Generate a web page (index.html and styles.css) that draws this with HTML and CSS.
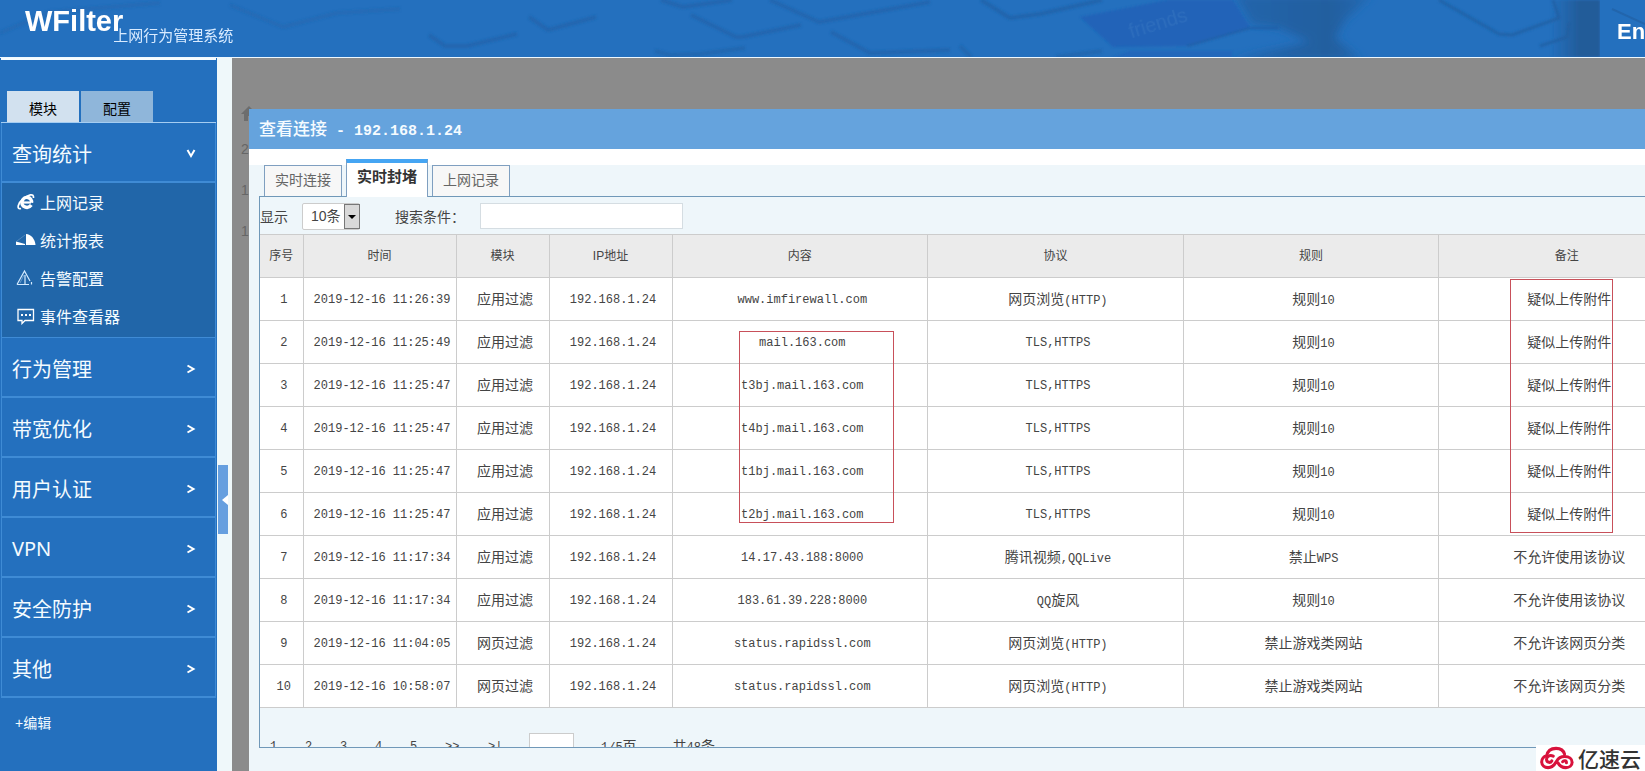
FILE: index.html
```html
<!DOCTYPE html>
<html lang="zh-CN">
<head>
<meta charset="utf-8">
<title>WFilter 上网行为管理系统</title>
<link rel="stylesheet" href="styles.css">
</head>
<body>
<div class="app">
  <header class="banner">
    <svg class="banner-art" viewBox="0 0 1645 57" preserveAspectRatio="xMinYMin slice" aria-hidden="true">
      <defs>
        <linearGradient id="edge" x1="0" x2="1"><stop offset="0" stop-color="#235f9f" stop-opacity="0"/><stop offset=".6" stop-color="#225c99"/></linearGradient>
        <linearGradient id="shade" x1="0" y1="0" x2="1" y2="0"><stop offset="0" stop-color="#2365ac"/><stop offset=".7" stop-color="#235f9f"/><stop offset="1" stop-color="#2369b2"/></linearGradient>
        <filter id="soft"><feGaussianBlur stdDeviation="1.2"/></filter>
        <filter id="softer"><feGaussianBlur stdDeviation="4"/></filter>
      </defs>
      <path d="M1235 -5 1252 24 1279 28 1310 42 1230 60H1362L1335 38 1345 20 1372 -5Z" fill="url(#shade)" filter="url(#softer)"/>
      <g filter="url(#soft)">
        <path d="M1080 17 1113 47 1187 46 1250 27 1233 0H1167Z" fill="#2064b8"/>
        <path d="M1187 46 1250 28 1279 28" stroke="#2160a8" stroke-width="2" fill="none"/>
        <path d="M1113 57 1130 51H1232V57Z" fill="#2067bb"/>
        <g fill="none" stroke="#2163a9" stroke-width="4" stroke-linejoin="round">
          <path d="M0 33 50 12 160 3M230 5 283 27 337 13 400 9" opacity=".4"/>
          <path d="M429 35 445 46H467L517 34M529 17 548 30 596 17M661 0 683 7 732 0M691 15 736 37 742 37 801 25M770 0 819 22 930 2M831 32 870 53 950 50" opacity=".7"/>
          <path d="M981 0 1010 18 1040 14 1102 0" opacity=".8"/>
          <path d="M1439 0 1499 34 1512 35 1559 18 1553 0M1540 46 1567 37 1569 22" stroke-width="3"/>
          <path d="M960 46 971 57M1056 57 1102 51M655 51 670 55 700 54 745 48" opacity=".6"/>
        </g>
        <rect x="1550" width="50" height="57" fill="url(#edge)"/>
      </g>
      <text class="key-label" transform="rotate(-17 1132 34)" x="1130" y="38">friends</text>
      <path d="M1600 0H1645V57H1600Z" fill="#2470be"/>
      <path d="M1612 9 1645 24" stroke="#2265ac" stroke-width="2"/>
    </svg>
    <div class="brand">
      <strong class="brand-name">WFilter</strong>
      <span class="brand-sub">上网行为管理系统</span>
    </div>
    <button class="lang" type="button">En</button>
  </header>

  <div class="body">
    <aside class="sidebar">
      <div class="side-tabs">
        <button class="side-tab side-tab-on" type="button">模块</button>
        <button class="side-tab" type="button">配置</button>
      </div>
      <nav class="menu">
        <button class="menu-item menu-open" type="button">查询统计<svg class="chev" viewBox="0 0 10 10"><path d="M1.500 1 5 7 8.500 1"/></svg></button>
        <ul class="submenu">
          <li><a class="sub-link" href="#"><svg class="sub-icon" viewBox="0 0 20 18"><path d="M6 9.500H15" stroke="#fff" stroke-width="2.200"/><path d="M15.500 9.800C16.500 4 8 2 6.200 8 4.500 14 12 16.500 15.300 12" fill="none" stroke="#fff" stroke-width="3.400"/><path d="M5 15.500C0 17 2 10 7 6 12 2 18-.500 17.500 5" fill="none" stroke="#fff" stroke-width="1.700"/></svg>上网记录</a></li>
          <li><a class="sub-link" href="#"><svg class="sub-icon" viewBox="0 0 20 18"><path d="M10 3C15 3 19 8 19.500 14H10Z" fill="#fff"/><path d="M0 10.500 9 13V14H0Z" fill="#fff"/><path d="M1 10 9 4" fill="none" stroke="#4f86bd"/></svg>统计报表</a></li>
          <li><a class="sub-link" href="#"><svg class="sub-icon" viewBox="0 0 20 18" fill="none" stroke="#d5ebff"><path d="M1 15.500 8.500 2 14 12M1 15.500H13M15.500 13V15.500M9 6V15" stroke-width="1.200"/><path d="M4 14 8 6" opacity=".4"/></svg>告警配置</a></li>
          <li><a class="sub-link" href="#"><svg class="sub-icon" viewBox="0 0 20 18" fill="none" stroke="#fff" stroke-width="1.300"><path d="M2 2.500H17.500V13.500H9L6 16.500V13.500H2Z"/><path d="M5 8H7M9 8H11M13 8H15" stroke-width="2"/></svg>事件查看器</a></li>
        </ul>
        <button class="menu-item" type="button">行为管理<svg class="chev" viewBox="0 0 10 10"><path d="M1.500 1.500 7.500 5 1.500 8.500"/></svg></button>
        <button class="menu-item" type="button">带宽优化<svg class="chev" viewBox="0 0 10 10"><path d="M1.500 1.500 7.500 5 1.500 8.500"/></svg></button>
        <button class="menu-item" type="button">用户认证<svg class="chev" viewBox="0 0 10 10"><path d="M1.500 1.500 7.500 5 1.500 8.500"/></svg></button>
        <button class="menu-item" type="button">VPN<svg class="chev" viewBox="0 0 10 10"><path d="M1.500 1.500 7.500 5 1.500 8.500"/></svg></button>
        <button class="menu-item" type="button">安全防护<svg class="chev" viewBox="0 0 10 10"><path d="M1.500 1.500 7.500 5 1.500 8.500"/></svg></button>
        <button class="menu-item" type="button">其他<svg class="chev" viewBox="0 0 10 10"><path d="M1.500 1.500 7.500 5 1.500 8.500"/></svg></button>
      </nav>
      <a class="edit" href="#">+编辑</a>
    </aside>

    <div class="gutter">
      <button class="collapse" type="button" aria-label="收起"><svg viewBox="0 0 6 10"><path d="M6 0V10L0 5Z" fill="#fff"/></svg></button>
    </div>

    <main class="stage">
      <div class="backdrop">
        <svg class="home" viewBox="0 0 16 16"><path d="M0 8 8 0 16 8H13V15H9V10H7V15H3V8Z" fill="#6d6d6d"/></svg>
        <span class="ghost">2</span><span class="ghost">1</span><span class="ghost">1</span>
      </div>
      <section class="dialog">
        <h1 class="dialog-title">查看连接<span class="title-ip"> - 192.168.1.24</span></h1>
        <div class="dialog-body">
          <div class="tabs">
            <button class="tab" type="button">实时连接</button>
            <button class="tab tab-on" type="button">实时封堵</button>
            <button class="tab" type="button">上网记录</button>
          </div>
          <div class="panel">
            <form class="filter">
              <label for="size">显示</label>
              <span class="select-box">
                <select id="size" class="size"><option>10条</option></select>
                <svg class="drop" viewBox="0 0 16 25" aria-hidden="true"><rect x=".5" y=".5" width="15" height="24" fill="#d9d9d9" stroke="#777"/><path d="M4 11H12L8 15Z"/></svg>
              </span>
              <label class="search-label" for="q">搜索条件：</label>
              <input id="q" class="search" type="text">
            </form>
            <div class="table-box">
              <table class="log">
                <colgroup><col class="c-no"><col class="c-time"><col class="c-mod"><col class="c-ip"><col><col><col><col></colgroup>
                <thead><tr><th>序号</th><th>时间</th><th>模块</th><th>IP地址</th><th>内容</th><th>协议</th><th>规则</th><th>备注</th></tr></thead>
                <tbody>
                  <tr><td class="m">1</td><td class="m">2019-12-16 11:26:39</td><td>应用过滤</td><td class="m">192.168.1.24</td><td class="m">www.imfirewall.com</td><td>网页浏览<span class="m">(HTTP)</span></td><td>规则<span class="m">10</span></td><td>疑似上传附件</td></tr>
                  <tr><td class="m">2</td><td class="m">2019-12-16 11:25:49</td><td>应用过滤</td><td class="m">192.168.1.24</td><td class="m">mail.163.com</td><td class="m">TLS,HTTPS</td><td>规则<span class="m">10</span></td><td>疑似上传附件</td></tr>
                  <tr><td class="m">3</td><td class="m">2019-12-16 11:25:47</td><td>应用过滤</td><td class="m">192.168.1.24</td><td class="m">t3bj.mail.163.com</td><td class="m">TLS,HTTPS</td><td>规则<span class="m">10</span></td><td>疑似上传附件</td></tr>
                  <tr><td class="m">4</td><td class="m">2019-12-16 11:25:47</td><td>应用过滤</td><td class="m">192.168.1.24</td><td class="m">t4bj.mail.163.com</td><td class="m">TLS,HTTPS</td><td>规则<span class="m">10</span></td><td>疑似上传附件</td></tr>
                  <tr><td class="m">5</td><td class="m">2019-12-16 11:25:47</td><td>应用过滤</td><td class="m">192.168.1.24</td><td class="m">t1bj.mail.163.com</td><td class="m">TLS,HTTPS</td><td>规则<span class="m">10</span></td><td>疑似上传附件</td></tr>
                  <tr><td class="m">6</td><td class="m">2019-12-16 11:25:47</td><td>应用过滤</td><td class="m">192.168.1.24</td><td class="m">t2bj.mail.163.com</td><td class="m">TLS,HTTPS</td><td>规则<span class="m">10</span></td><td>疑似上传附件</td></tr>
                  <tr><td class="m">7</td><td class="m">2019-12-16 11:17:34</td><td>应用过滤</td><td class="m">192.168.1.24</td><td class="m">14.17.43.188:8000</td><td>腾讯视频<span class="m">,QQLive</span></td><td>禁止<span class="m">WPS</span></td><td>不允许使用该协议</td></tr>
                  <tr><td class="m">8</td><td class="m">2019-12-16 11:17:34</td><td>应用过滤</td><td class="m">192.168.1.24</td><td class="m">183.61.39.228:8000</td><td><span class="m">QQ</span>旋风</td><td>规则<span class="m">10</span></td><td>不允许使用该协议</td></tr>
                  <tr><td class="m">9</td><td class="m">2019-12-16 11:04:05</td><td>网页过滤</td><td class="m">192.168.1.24</td><td class="m">status.rapidssl.com</td><td>网页浏览<span class="m">(HTTP)</span></td><td>禁止游戏类网站</td><td>不允许该网页分类</td></tr>
                  <tr><td class="m">10</td><td class="m">2019-12-16 10:58:07</td><td>网页过滤</td><td class="m">192.168.1.24</td><td class="m">status.rapidssl.com</td><td>网页浏览<span class="m">(HTTP)</span></td><td>禁止游戏类网站</td><td>不允许该网页分类</td></tr>
                </tbody>
              </table>
              <div class="mark mark-host"></div>
              <div class="mark mark-note"></div>
            </div>
            <div class="pager">
              <a class="page" href="#">1</a><a class="page" href="#">2</a><a class="page" href="#">3</a><a class="page" href="#">4</a><a class="page" href="#">5</a><a class="page page-step" href="#">&gt;&gt;</a><a class="page page-step" href="#">&gt;|</a>
              <input class="page-input" type="text" aria-label="页码">
              <span class="page-info"><span class="m">1/5</span>页</span>
              <span class="page-total">共<span class="m">48</span>条</span>
            </div>
          </div>
        </div>
      </section>
    </main>
  </div>

  <div class="watermark">
    <svg class="cloud" viewBox="0 0 36 24" fill="none" stroke="#d8123c" stroke-width="3.200" stroke-linecap="round"><path d="M7 10C4 10 1.800 13 1.800 16 1.800 20 5 22.200 8.500 22.200 14 22.200 16 18 17.500 15.500 19.500 12 22 10.500 26 10.500 31 10.500 34 13 34 16.500 34 20 31 22.200 27.500 22.200 23 22.200 20 19 19 17"/><path d="M7 10C8 4 12 1.800 17 1.800 22 1.800 25 4 26 8"/><path d="M14 10C10 8 6.500 11 7 14 7.500 17 11.500 17.500 12.500 15M24 16C25 14.500 28 14.500 28 17"/></svg>
    <span class="watermark-text">亿速云</span>
  </div>
</div>
</body>
</html>
```
FILE: styles.css
```css
* { box-sizing: border-box; }

body {
  margin: 0;
  overflow: hidden;
  font-family: "Liberation Sans", "Noto Sans CJK SC", sans-serif;
  font-size: 14px;
  color: #444;
}

button, input, select { font: inherit; color: inherit; margin: 0; }
button { border: 0; padding: 0; background: none; cursor: pointer; }
a { color: inherit; text-decoration: none; }

.app { height: 100vh; display: flex; flex-direction: column; background: #2470be; }

/* banner */
.banner {
  position: relative;
  flex: none;
  height: 58px;
  display: flex;
  justify-content: space-between;
  border-bottom: 1px solid #eef8ff;
  background: #2470be;
  color: #fff;
}
.banner-art { position: absolute; inset: 0; width: 100%; height: 100%; }
.key-label { font: 20px "Liberation Sans", sans-serif; fill: #3d7cc4; opacity: .4; }
.brand { position: relative; display: flex; align-items: flex-start; padding-left: 25px; }
.brand-name { font-size: 29px; line-height: 32px; padding-top: 5px; }
.brand-sub { font-size: 15px; line-height: 20px; padding-top: 26px; margin-left: -10px; color: #d9ebff; }
.lang { position: relative; width: 45px; padding: 6px 0 0 17px; text-align: left; font-size: 22px; font-weight: bold; }

.body { flex: 1; min-height: 0; display: flex; }

/* sidebar */
.sidebar { flex: none; width: 217px; color: #f4fbff; overflow: hidden; }
.side-tabs {
  display: flex;
  align-items: flex-end;
  gap: 2px;
  height: 65px;
  margin: 0 1px;
  padding-left: 6px;
  border-top: 2px solid #f4fbff;
  border-bottom: 1px solid #a5cdf2;
}
.side-tab { width: 72px; height: 31px; padding-top: 2px; color: #000; background: #8fb6da; }
.side-tab-on { background: #d2e1ef; }
.menu { display: flex; flex-direction: column; margin: 0 1px; border: solid #3f8bd5; border-width: 0 1px; }
.menu-item {
  display: flex;
  align-items: center;
  justify-content: space-between;
  height: 60px;
  padding: 3px 19px 0 10px;
  border-bottom: 2px solid #3f8bd5;
  font-family: "Noto Sans", "Noto Sans CJK SC", sans-serif;
  font-size: 20px;
}
.chev { width: 10px; height: 10px; fill: none; stroke: #fff; stroke-width: 2; }
.submenu { list-style: none; margin: 0; height: 155px; background: #2166a9; border-bottom: 1px solid #3f8bd5; padding: 0; }
.sub-link { display: flex; align-items: center; gap: 4px; height: 38px; padding-left: 14px; font-size: 16px; }
.sub-icon { width: 20px; height: 18px; }
.edit { display: block; padding: 15px; line-height: 20px; }

.gutter { flex: none; width: 15px; display: flex; align-items: center; padding: 170px 0 0 1px; background: #eff8fa; }
.collapse { width: 10px; height: 69px; display: flex; align-items: center; justify-content: flex-end; background: #669fdf; }
.collapse svg { width: 6px; height: 10px; }

/* content behind the dialog */
.stage { position: relative; flex: 1; min-width: 0; overflow: hidden; background: #8b8b8b; }
.backdrop { display: flex; flex-direction: column; padding: 48px 0 0 9px; }
.home { width: 16px; height: 16px; margin-bottom: 17px; }
.ghost { height: 41px; line-height: 20px; color: #666; }

/* dialog, wider than the visible area */
.dialog { position: absolute; top: 51px; left: 17px; right: -61px; bottom: 0; display: flex; flex-direction: column; background: #eef6fa; }
.dialog-title {
  margin: 0;
  height: 40px;
  padding-left: 10px;
  font: 500 17px/38px "Noto Sans CJK SC", sans-serif;
  color: #f5fbff;
  background: #65a3dd;
  white-space: pre;
}
.title-ip { font: bold 15px "Liberation Mono", monospace; }
.dialog-body { flex: 1; min-height: 0; display: flex; flex-direction: column; padding: 0 10px 23px; border-top: 16px solid #fff; }
.tabs { display: flex; align-items: flex-end; gap: 4px; padding-left: 5px; height: 31px; }
.tab { width: 78px; height: 31px; padding-bottom: 5px; border: 1px solid #7f9fc0; border-bottom: 0; background: #f7f7f7; color: #666; }
.tab-on {
  position: relative;
  z-index: 1;
  width: 82px;
  height: 38px;
  margin-bottom: -1px;
  padding-bottom: 9px;
  border-top: 4px solid #45a5f3;
  background: #fff;
  color: #333;
  font-size: 15px;
  font-weight: bold;
}
.panel { flex: 1; min-height: 0; overflow: hidden; border: 1px solid #7098b8; }

.filter { display: flex; align-items: center; height: 37px; padding-top: 1px; }
.select-box { position: relative; margin-left: 14px; }
.size { display: block; appearance: none; width: 58px; height: 27px; padding: 0 0 0 8px; border: 1px solid #ccc; border-radius: 2px; background: #fff; }
.drop { position: absolute; top: 1px; right: 0; width: 16px; height: 25px; pointer-events: none; }
.search-label { width: 85px; margin-left: 35px; white-space: nowrap; }
.search { width: 203px; height: 26px; border: 1px solid #d5dde2; background: #fff; }

.table-box { position: relative; }
.log { width: 100%; table-layout: fixed; border-collapse: collapse; background: #fff; }
.log th, .log td { height: 43px; padding: 0 0 2px; border: 1px solid #ccc; text-align: center; white-space: nowrap; }
.log th { padding-bottom: 4px; background: #ebebeb; font-size: 12px; font-weight: normal; }
.log td { padding-left: 5px; }
.log tr > :first-child { border-left: 0; }
.c-no { width: 43px; }
.c-time { width: 153px; }
.c-mod { width: 93px; }
.c-ip { width: 123px; }
.m, .log td.m { font-family: "Liberation Mono", monospace; font-size: 12px; }
.log td.m { padding-top: 2px; padding-bottom: 0; }

/* highlighted ranges */
.mark { position: absolute; border: 1px solid #c8505a; }
.mark-host { left: 479px; top: 97px; width: 155px; height: 192px; }
.mark-note { left: 1250px; top: 45px; width: 103px; height: 254px; }

.pager { display: flex; align-items: center; height: 28px; margin-top: 25px; padding-left: 8px; }
.page { width: 35px; padding-left: 2px; font: 12px "Liberation Mono", monospace; }
.page-step { width: 43px; }
.page-input { width: 45px; height: 28px; border: 1px solid #ccc; background: #fff; }
.page-info { margin-left: 27px; margin-bottom: 4px; }
.page-total { margin-left: 36px; margin-bottom: 4px; }

.watermark { position: absolute; right: 0; bottom: 0; width: 109px; height: 26px; display: flex; align-items: center; gap: 4px; padding-left: 4px; background: #fff; }
.cloud { width: 34px; height: 24px; }
.watermark-text { font: 500 21px/26px "Noto Sans CJK SC", sans-serif; color: #333; }
```
